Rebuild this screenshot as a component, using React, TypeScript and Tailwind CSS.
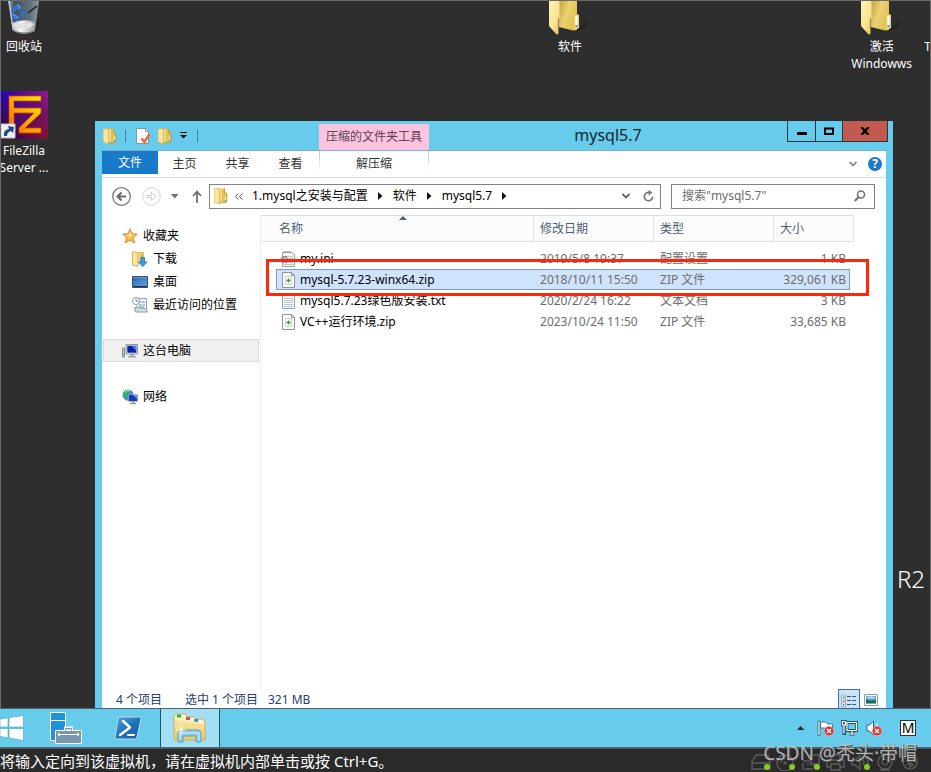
import type { ReactNode } from "react";
import clsx from "clsx";

type FileRow = {
  name: string;
  date: string;
  type: string;
  size: string;
  icon: "ini" | "zip" | "txt";
};

const files: FileRow[] = [
  { name: "my.ini", date: "2019/5/8 19:37", type: "配置设置", size: "1 KB", icon: "ini" },
  { name: "mysql-5.7.23-winx64.zip", date: "2018/10/11 15:50", type: "ZIP 文件", size: "329,061 KB", icon: "zip" },
  { name: "mysql5.7.23绿色版安装.txt", date: "2020/2/24 16:22", type: "文本文档", size: "3 KB", icon: "txt" },
  { name: "VC++运行环境.zip", date: "2023/10/24 11:50", type: "ZIP 文件", size: "33,685 KB", icon: "zip" },
];

const selectedName = "mysql-5.7.23-winx64.zip";

function FolderIcon() {
  return (
    <svg width="14" height="16" viewBox="0 0 14 16" aria-hidden="true">
      <path d="M4 .5h7v4.500l2 1v8.500H4z" fill="#e3c050" />
      <path d="M5.500 1.500H8v12H5.500z" fill="#f0d988" />
      <path d="M0 1l4-.5 1.500 1V16L0 14z" fill="#f8e7a0" stroke="#d4ac42" strokeWidth=".7" />
      <path d="M10.500.5V5h2.300v9L5.500 15.200" fill="none" stroke="#c0952f" strokeWidth=".8" />
      <path d="M11.500 8.500v4" stroke="#fff" />
      <path d="M11 12h1.200v1.200H11z" fill="#4f9be8" />
    </svg>
  );
}

function BigFolderIcon() {
  return (
    <svg width="42" height="34" viewBox="0 0 42 34" aria-hidden="true">
      <defs>
        <linearGradient id="folder-front" x1="0" x2="1" y2="1">
          <stop offset="0" stopColor="#fff3b4" />
          <stop offset=".6" stopColor="#f8e391" />
          <stop offset="1" stopColor="#e3bf55" />
        </linearGradient>
        <linearGradient id="folder-back" x1="0" x2="1" y2=".5">
          <stop offset="0" stopColor="#c5a23e" />
          <stop offset=".5" stopColor="#ecd173" />
          <stop offset="1" stopColor="#e2c04f" />
        </linearGradient>
      </defs>
      <path d="M28 30l8-8 4-5-3 8-6 4z" fill="#222" />
      <path d="M10 0h18v29l-4 .5L10 26z" fill="url(#folder-back)" />
      <path d="M25 14l3-1 2 1v13l-5 2z" fill="#efd77f" />
      <path d="M27.5 15v9" stroke="#fff" strokeWidth="2" />
      <path d="M26.5 24h2v2h-2z" fill="#5596e5" />
      <path d="M0 0h10.500v17l-1 1v15l-2 .5L0 25z" fill="url(#folder-front)" />
    </svg>
  );
}

function RecycleBinIcon() {
  return (
    <svg width="36" height="34" viewBox="-1 0 36 34" aria-hidden="true">
      <defs>
        <linearGradient id="bin-glass" x1="0" x2="1">
          <stop offset="0" stopColor="#aab9c4" />
          <stop offset=".2" stopColor="#43505c" />
          <stop offset=".7" stopColor="#61707c" />
          <stop offset="1" stopColor="#8b9aa5" />
        </linearGradient>
        <linearGradient id="bin-base" x1="0" x2="1">
          <stop offset="0" stopColor="#b8b8b8" />
          <stop offset=".4" stopColor="#f4f4f4" />
          <stop offset="1" stopColor="#9b9b9b" />
        </linearGradient>
      </defs>
      <path d="M28 31l6-5-2-8-4 2z" fill="#242424" />
      <path d="M1 0h31l-4 30q-11 6-22 0z" fill="url(#bin-glass)" />
      <path d="M4.500 22q12-5 24-1l-1.500 9q-10 5-20 0z" fill="url(#bin-base)" />
      <path d="M6 24l5-2 5 2 6-3 5 2-4 4-7 1-8-1z" fill="#dfe2e3" />
      <path d="M7 5l4-2 3 3-1 3-3-1-2 3-3-1zM14 9l4 1-1 6-3-1zM5 12l3 1 5 4-3 3-5-3z" fill="#2f6fd8" />
      <path d="M10 4l3 2-1 2M6 13l5 4" stroke="#78acf1" fill="none" />
      <path d="M21 12l9-7" stroke="#29333c" strokeWidth="2" />
      <path d="M2 0l4 29" stroke="#cbd8e0" />
      <path d="M7 30q10 4 20 0" stroke="#777" fill="none" />
    </svg>
  );
}

function FileZillaIcon() {
  return (
    <svg width="48" height="48" viewBox="0 0 48 48" aria-hidden="true">
      <defs>
        <linearGradient id="fz-bg" x1="0" x2="1" y2="1">
          <stop offset="0" stopColor="#0b00f0" />
          <stop offset=".45" stopColor="#4b0a84" />
          <stop offset="1" stopColor="#a01420" />
        </linearGradient>
        <linearGradient id="fz-tint" x1="1" x2="0" y1="0" y2="1">
          <stop offset="0" stopColor="#a0229a" stopOpacity=".8" />
          <stop offset=".5" stopColor="#5a0d50" stopOpacity=".3" />
          <stop offset="1" stopColor="#12002a" />
        </linearGradient>
        <linearGradient id="fz-fg" x1="0" x2="1" y1="1" y2="0">
          <stop offset="0" stopColor="#ff6b00" />
          <stop offset="1" stopColor="#fff200" />
        </linearGradient>
      </defs>
      <path d="M0 0h48v48H0z" fill="url(#fz-bg)" />
      <path d="M0 0h48v48H0z" fill="url(#fz-tint)" />
      <path
        d="M9 5h32v5H14v7h27v5L25 37h16v5H19v-5l15-15H14v19H9z"
        fill="url(#fz-fg)"
        stroke="#d43a10"
        strokeWidth=".8"
      />
      <path d="M1 33h14v14H1z" fill="#eef0f4" stroke="#c3c7ce" />
      <path d="M4 45q-1-6 5-7l-1-3 6 1-1 6-2-2q-4 1-4 5z" fill="#1c4a86" />
    </svg>
  );
}

function PropertiesIcon() {
  return (
    <svg width="15" height="16" viewBox="0 0 15 16" aria-hidden="true">
      <path d="M.5.5h9l3 3v12H.5z" fill="#fff" stroke="#8d949b" />
      <path d="M9.500.5v3h3" fill="#e8e8e8" stroke="#8d949b" />
      <path d="M5.500 10.500l3 3.500L13.500 6" fill="none" stroke="#e8703f" strokeWidth="2.600" />
    </svg>
  );
}

function StarIcon() {
  return (
    <svg width="16" height="16" viewBox="0 0 16 16" aria-hidden="true">
      <path
        d="M8 .8l2 5 5.300.3-4.200 3.400 1.500 5.400L8 12l-4.700 2.900 1.500-5.400L.7 6.100 6 5.800z"
        fill="#fcbf45"
        stroke="#e2862a"
        strokeLinejoin="round"
      />
      <path d="M8 3l1.300 3.700H13L8 9.500 4 7l2.500-.3z" fill="#ffe39a" />
    </svg>
  );
}

function DownloadsIcon() {
  return (
    <svg width="16" height="16" viewBox="0 0 16 16" aria-hidden="true">
      <path d="M3 1h9v12H5z" fill="#e3bf57" />
      <path d="M6 2h2v11H6z" fill="#f6e19a" />
      <path d="M.5 1H5l1 1v13.500l-5.500-1.500z" fill="#f9e7a0" stroke="#cfa63e" strokeWidth=".8" />
      <path d="M9 6.500h3.500V11H15l-4.200 4.500L6.500 11H9z" fill="#39a0ea" stroke="#1e6fb8" strokeWidth=".8" />
    </svg>
  );
}

function DesktopIcon() {
  return (
    <svg width="16" height="16" viewBox="0 0 16 16" aria-hidden="true">
      <defs>
        <linearGradient id="desk-screen" x1="0" x2="1" y2="1">
          <stop offset="0" stopColor="#2d65b5" />
          <stop offset="1" stopColor="#5fa3e3" />
        </linearGradient>
      </defs>
      <path d="M.5 2.500h15v11H.5z" fill="url(#desk-screen)" stroke="#3c4f69" />
      <path d="M1 12.500h14" stroke="#1d3354" />
      <path d="M1.500 3.500h13" stroke="#83b4e6" strokeWidth=".6" />
    </svg>
  );
}

function RecentIcon() {
  return (
    <svg width="16" height="16" viewBox="0 0 16 16" aria-hidden="true">
      <path d="M5 1.500h9.500V12H5z" fill="#f5f7f8" stroke="#99a1a8" />
      <path d="M7 5h2M10 5h3M7 8h3M11 8h2M7 10h5" stroke="#4897c5" />
      <path d="M2.500 10.500l11 1 2 3.500H3.500z" fill="#d9dde0" stroke="#949b9f" />
      <circle cx="4" cy="4" r="3.500" fill="#fff" stroke="#8f989f" />
      <path d="M4 2v2.200h1.800" stroke="#55606a" fill="none" strokeWidth=".8" />
    </svg>
  );
}

function ComputerIcon() {
  return (
    <svg width="16" height="16" viewBox="0 0 16 16" aria-hidden="true">
      <path d="M.5 5h2v9h-2z" fill="#c3c8cb" stroke="#737b80" strokeWidth=".8" />
      <path d="M1 11h1v1H1z" fill="#3fb54b" />
      <path d="M4 1.500h11.500V11H4z" fill="#dfe5ea" stroke="#7f8a92" strokeWidth=".8" />
      <path d="M5.300 2.800h9v6.900h-9z" fill="#0b1fb0" />
      <path d="M9.500 2.800h4.800V8z" fill="#517ce6" />
      <path d="M8.500 11h3v2h2.500v1.500H6V13h2.500z" fill="#9fa7ac" />
    </svg>
  );
}

function NetworkIcon() {
  return (
    <svg width="16" height="16" viewBox="0 0 16 16" aria-hidden="true">
      <circle cx="6" cy="6" r="5.500" fill="#3d8ed6" />
      <path d="M2 3q3-3 6-2L6 4 4 5l1 2-2 1-2-2zM4 9l3-1 1 3-3 .5z" fill="#3cb545" />
      <path d="M3 3q2-2 5-1.500" stroke="#c7f0c4" fill="none" />
      <path d="M6.500 5.500h9v7h-9z" fill="#dbe3ea" stroke="#77828c" strokeWidth=".5" />
      <path d="M7 6h8.200v6H7z" fill="#1a34ba" />
      <path d="M11 6h4.200v4z" fill="#6f98ed" />
      <path d="M10 12.500h2v1.500h2v1.300H8V14h2z" fill="#8b959c" />
    </svg>
  );
}

function FileIcon({ kind }: { kind: FileRow["icon"] }) {
  if (kind === "zip") {
    return (
      <svg width="16" height="16" viewBox="0 0 16 16" aria-hidden="true">
        <path d="M2.500.5h9l3 3v12h-12z" fill="#fff" stroke="#8e9499" />
        <path d="M11.500.5v3h3" fill="none" stroke="#8e9499" />
        <path d="M5.500 4.500h6v8h-6z" fill="#fff" stroke="#cdd2d5" />
        <path d="M6.500 8.500h4M8.500 6.500v4" stroke="#28a12b" strokeWidth="1.400" />
      </svg>
    );
  }
  return (
    <svg width="16" height="16" viewBox="0 0 16 16" aria-hidden="true">
      <path d="M2.500 1.500h9l3 2v12h-12z" fill="#f6f8f9" stroke="#9aa0a5" />
      <path d="M4 0v2M6 0v2M8 0v2M10 0v2" stroke="#7e868c" strokeWidth=".8" />
      <path d="M4 5.500h9M4 7.500h9M4 9.500h9M4 11.500h9M4 13.500h9" stroke="#b4c7d2" />
      {kind === "ini" ? (
        <g>
          <circle cx="4.500" cy="8.500" r="2.800" fill="#d8e1e8" stroke="#60727f" strokeWidth="1.600" strokeDasharray="1.500 .8" />
          <circle cx="4.500" cy="8.500" r="1" fill="#607f98" />
        </g>
      ) : null}
    </svg>
  );
}

function Caret({ className }: { className?: string }) {
  return (
    <svg width="5" height="8" viewBox="0 0 5 8" className={className} aria-hidden="true">
      <path d="M0 0l4.500 4L0 8z" fill="#111" />
    </svg>
  );
}

function DesktopItem({ label, className, children }: { label: ReactNode; className: string; children: ReactNode }) {
  return (
    <button type="button" className={clsx("absolute flex flex-col items-center text-xs leading-[17px] text-white", className)}>
      {children}
      <span>{label}</span>
    </button>
  );
}

function NavItem({ label, icon, className }: { label: string; icon: ReactNode; className: string }) {
  return (
    <button type="button" className={clsx("flex h-[23px] items-center gap-[5px] text-left text-black", className)}>
      {icon}
      <span>{label}</span>
    </button>
  );
}

function TitleBar() {
  return (
    <header className="flex h-[29px] items-start pr-[5px] pl-[6px]">
      <div className="flex h-full w-[218px] items-center pl-[2px]">
        <FolderIcon />
        <span className="ml-2 h-3 w-px bg-[#477f98]" />
        <button type="button" aria-label="属性" className="ml-[10px]"><PropertiesIcon /></button>
        <button type="button" aria-label="新建文件夹" className="ml-[7px]"><FolderIcon /></button>
        <button type="button" aria-label="自定义快速访问工具栏" className="ml-2">
          <svg width="8" height="7" viewBox="0 0 8 7" aria-hidden="true">
            <path d="M0 .5h7" stroke="#111" />
            <path d="M0 3h7L3.500 6.500z" fill="#111" />
          </svg>
        </button>
        <span className="ml-[9px] h-3 w-px bg-[#477f98]" />
      </div>
      <div className="mt-[3px] flex h-[26px] w-[110px] items-center justify-center bg-[#fbc3de] text-[#5b4351]">
        压缩的文件夹工具
      </div>
      <h1 className="flex-1 text-center text-base leading-7 text-[#16262e]">mysql5.7</h1>
      <div className="flex h-[21px] border-x border-b border-[#28363c]">
        <button type="button" aria-label="最小化" className="flex w-[27px] items-center justify-center">
          <svg width="10" height="10" viewBox="0 0 10 10" aria-hidden="true"><path d="M0 6h10v3H0z" fill="#000" /></svg>
        </button>
        <button type="button" aria-label="最大化" className="flex w-[27px] items-center justify-center border-l border-[#28363c]">
          <svg width="10" height="8" viewBox="0 0 10 8" aria-hidden="true"><path d="M1 1.500h8v5.500H1z" fill="none" stroke="#000" strokeWidth="2" /></svg>
        </button>
        <button type="button" aria-label="关闭" className="flex w-[45px] items-center justify-center border-l border-[#28363c] bg-[#c35a50]">
          <svg width="10" height="8" viewBox="0 0 10 8" aria-hidden="true"><path d="M1.500 0l7 8M8.500 0l-7 8" stroke="#000" strokeWidth="2.400" /></svg>
        </button>
      </div>
    </header>
  );
}

function Ribbon() {
  return (
    <nav className="flex h-7 items-start border-t border-b border-t-[#7fb0c8] border-b-[#dcdcdc] text-[#333]">
      <button type="button" className="h-[23px] w-14 bg-[#1979ca] text-white">文件</button>
      {["主页", "共享", "查看"].map((tab) => (
        <button key={tab} type="button" className="h-[26px] w-[53px]">{tab}</button>
      ))}
      <div className="ml-[2px] flex">
        <span className="h-5 w-px bg-linear-to-b from-[#c4c4c4] to-white" />
        <button type="button" className="h-[26px] w-[108px]">解压缩</button>
        <span className="h-5 w-px bg-linear-to-b from-[#c4c4c4] to-white" />
      </div>
      <div className="ml-auto flex h-[26px] items-center gap-[11px] pr-1">
        <button type="button" aria-label="展开功能区">
          <svg width="8" height="6" viewBox="0 0 8 6" aria-hidden="true"><path d="M.5 1L4 4.500 7.500 1" fill="none" stroke="#8d8d8d" strokeWidth="1.800" /></svg>
        </button>
        <button type="button" aria-label="帮助" className="size-[14px] rounded-full bg-[#1979ca] font-bold leading-[14px] text-white">?</button>
      </div>
    </nav>
  );
}

function AddressRow() {
  return (
    <div className="flex h-[37px] items-center pr-[11px] pb-px pl-[10px]">
      <button type="button" aria-label="后退">
        <svg width="19" height="19" viewBox="0 0 19 19" aria-hidden="true">
          <circle cx="9.500" cy="9.500" r="8.800" fill="none" stroke="#747474" strokeWidth="1.200" />
          <path d="M14 9.500H6M9.500 5.500l-4 4 4 4" fill="none" stroke="#6a6a6a" strokeWidth="2" />
        </svg>
      </button>
      <button type="button" aria-label="前进" className="ml-[11px]">
        <svg width="19" height="19" viewBox="0 0 19 19" aria-hidden="true">
          <circle cx="9.500" cy="9.500" r="8.800" fill="none" stroke="#d4d4d4" />
          <path d="M5 8.500h4.500V5.500l4.500 4-4.500 4v-3H5z" fill="none" stroke="#cfcfcf" />
        </svg>
      </button>
      <button type="button" aria-label="最近浏览的位置" className="ml-[10px]">
        <svg width="8" height="5" viewBox="0 0 8 5" aria-hidden="true"><path d="M0 0h7.500L3.800 4.500z" fill="#707070" /></svg>
      </button>
      <button type="button" aria-label="上移" className="ml-[13px]">
        <svg width="10" height="13" viewBox="0 0 10 13" aria-hidden="true"><path d="M5 13V2M1 6l4-4.500L9 6" fill="none" stroke="#6f6f6f" strokeWidth="1.800" /></svg>
      </button>
      <div className="ml-[7px] flex h-[25px] min-w-0 flex-1 items-center border border-[#828282] pr-[6px] pl-1 text-black">
        <FolderIcon />
        <svg width="8" height="7" viewBox="0 0 8 7" className="ml-[7px]" aria-hidden="true"><path d="M3.500.5l-3 3 3 3M7.500.5l-3 3 3 3" fill="none" stroke="#555" /></svg>
        <button type="button" className="ml-[9px]">1.mysql之安装与配置</button>
        <Caret className="ml-[10px]" />
        <button type="button" className="ml-[10px]">软件</button>
        <Caret className="ml-[10px]" />
        <button type="button" className="ml-[10px]">mysql5.7</button>
        <Caret className="ml-[10px]" />
        <button type="button" aria-label="以前的位置" className="ml-auto">
          <svg width="8" height="6" viewBox="0 0 8 6" aria-hidden="true"><path d="M.5 1L4 4.500 7.500 1" fill="none" stroke="#606060" strokeWidth="1.800" /></svg>
        </button>
        <button type="button" aria-label="刷新" className="ml-[13px]">
          <svg width="11" height="12" viewBox="0 0 11 12" aria-hidden="true">
            <path d="M6.500 2.500A4.200 4.200 0 1 0 9.700 6.500" fill="none" stroke="#777" strokeWidth="1.600" />
            <path d="M5.500 0v5.500L9.500 2.500z" fill="#777" />
          </svg>
        </button>
      </div>
      <label className="ml-[10px] flex h-[25px] w-[204px] items-center border border-[#828282] pr-2 pl-[10px]">
        <input type="search" aria-label="搜索" placeholder={'搜索"mysql5.7"'} className="min-w-0 flex-1 bg-transparent outline-none placeholder:text-[#6d6d6d]" />
        <svg width="12" height="12" viewBox="0 0 12 12" aria-hidden="true">
          <circle cx="7" cy="4.500" r="3.500" fill="none" stroke="#707070" strokeWidth="1.600" />
          <path d="M4.500 7L.8 11" stroke="#707070" strokeWidth="2" />
        </svg>
      </label>
    </div>
  );
}

function NavPane() {
  return (
    <aside className="flex w-[159px] shrink-0 flex-col border-r border-[#ededed] px-px pt-[9px]">
      <NavItem label="收藏夹" icon={<StarIcon />} className="pl-[19px]" />
      <NavItem label="下载" icon={<DownloadsIcon />} className="pl-[29px]" />
      <NavItem label="桌面" icon={<DesktopIcon />} className="pl-[29px]" />
      <NavItem label="最近访问的位置" icon={<RecentIcon />} className="pl-[29px]" />
      <NavItem label="这台电脑" icon={<ComputerIcon />} className="mt-[23px] border border-[#d9d9d9] bg-[#f0f0f0] pl-[18px]" />
      <NavItem label="网络" icon={<NetworkIcon />} className="mt-[23px] pl-[19px]" />
    </aside>
  );
}

function FileList() {
  return (
    <div className="relative min-w-0 flex-1 pl-px">
      <table className="w-[592px] table-fixed border-separate border-spacing-0 text-left">
        <colgroup>
          <col className="w-[14px]" />
          <col className="w-[258px]" />
          <col className="w-[120px]" />
          <col className="w-[120px]" />
          <col className="w-[76px]" />
          <col className="w-1" />
        </colgroup>
        <thead className="text-[#4c607a]">
          <tr className="h-[27px] bg-[#fcfcfc]">
            <th colSpan={2} className="relative border-y border-r border-[#dedfe1] pl-[17px] font-normal">
              名称
              <svg width="8" height="4" viewBox="0 0 8 4" className="absolute top-0 left-[137px]" aria-hidden="true"><path d="M4 0l4 4H0z" fill="#4c607a" /></svg>
            </th>
            <th className="border-y border-r border-[#dedfe1] pl-[6px] font-normal">修改日期</th>
            <th className="border-y border-r border-[#dedfe1] pl-[6px] font-normal">类型</th>
            <th colSpan={2} className="border-y border-r border-[#dedfe1] pl-[6px] font-normal">大小</th>
          </tr>
        </thead>
        <tbody className="text-[#6d6d6d]">
          <tr className="h-[6px]"><td colSpan={6} /></tr>
          {files.map((file) => {
            const selected = file.name === selectedName;
            const cell = selected ? "bg-[#cfe3fd]" : "";
            return (
              <tr key={file.name} className={clsx("h-[21px]", selected && "relative")}>
                <td />
                <td className={clsx("pl-1 text-black", cell)}>
                  <span className="flex items-center gap-1">
                    <FileIcon kind={file.icon} />
                    {file.name}
                  </span>
                </td>
                <td className={clsx("pl-[6px]", cell)}>{file.date}</td>
                <td className={clsx("pl-[6px]", cell)}>{file.type}</td>
                <td className={clsx("pr-1 text-right", cell)}>{file.size}</td>
                <td>
                  {selected ? <span className="absolute inset-y-0 right-1 left-[14px] border border-[#7c9fca]" /> : null}
                </td>
              </tr>
            );
          })}
        </tbody>
      </table>
      <div className="pointer-events-none absolute top-[44px] left-[5px] h-[37px] w-[603px] border-3 border-[#fb280b]" />
    </div>
  );
}

function StatusBar() {
  return (
    <footer className="flex h-[19px] shrink-0 items-start pr-2 pl-[14px] leading-[22px] text-[#24406c]">
      <span className="w-[69px]">4 个项目</span>
      <span className="w-[83px]">选中 1 个项目</span>
      <span>321 MB</span>
      <button type="button" aria-label="详细信息" className="ml-auto flex h-[19px] w-[22px] justify-center border border-b-0 border-[#36719f] bg-[#c8e4f8] pt-1">
        <svg width="16" height="14" viewBox="0 0 16 14" aria-hidden="true">
          <path d="M.5 1h4v12h-4zM.5 5h4M.5 9h4" fill="#fff" stroke="#8599aa" strokeWidth=".7" />
          <path d="M2 2.500h1.500v1.500H2z" fill="#3a8b49" />
          <path d="M2 6.300h1.500v1.500H2z" fill="#d82424" />
          <path d="M2 10.300h1.500v1.500H2z" fill="#2868c4" />
          <path d="M6 2.500h4M11 2.500h4M6 6.500h4M11 6.500h4M6 10.500h4M11 10.500h4" stroke="#43576b" />
        </svg>
      </button>
      <button type="button" aria-label="大缩略图" className="ml-[3px] flex h-[19px] w-[15px] justify-center pt-[5px]">
        <svg width="14" height="12" viewBox="0 0 14 12" aria-hidden="true">
          <path d="M.5.5h13v11H.5z" fill="#fff" stroke="#8d99a5" />
          <path d="M2 2h10v7.500H2z" fill="#6bb5e6" />
          <path d="M2 5l4.500 1.500L12 5.500v4H2z" fill="#246b5d" />
          <path d="M4 4q3-2 6 0" stroke="#fff" fill="none" />
        </svg>
      </button>
    </footer>
  );
}

function Explorer() {
  return (
    <section aria-label="mysql5.7" className="absolute top-[120px] right-[37px] bottom-0 left-[94px] flex flex-col bg-[#67cbeb] text-xs">
      <TitleBar />
      <div className="mx-[7px] flex min-h-0 flex-1 flex-col bg-white">
        <Ribbon />
        <AddressRow />
        <div className="flex min-h-0 flex-1">
          <NavPane />
          <FileList />
        </div>
        <StatusBar />
      </div>
    </section>
  );
}

function ErrorBadge({ x, y }: { x: number; y: number }) {
  return (
    <g>
      <circle cx={x} cy={y} r="4.700" fill="#df3028" stroke="#f5b6b1" strokeWidth=".6" />
      <path d={`M${x - 2} ${y - 2}l4 4M${x + 2} ${y - 2}l-4 4`} stroke="#fff" strokeWidth="1.500" />
    </g>
  );
}

function Taskbar() {
  return (
    <div className="flex h-10 shrink-0 items-center border-t border-b border-[#4d6570] bg-[#67cbeb] pr-[15px]">
      <button type="button" aria-label="开始">
        <svg width="24" height="26" viewBox="0 0 24 26" aria-hidden="true">
          <path d="M0 4l8-1.200V12H0zM9 2.600L23.500.5V12H9zM0 13.500h8v9.200L0 21.500zM9 13.500h14.500v12L9 23z" fill="#fff" stroke="#429fbd" strokeWidth=".6" />
        </svg>
      </button>
      <button type="button" aria-label="服务器管理器" className="ml-[26px]">
        <svg width="32" height="32" viewBox="0 0 32 32" aria-hidden="true">
          <path d="M.5.500h15v28H.5z" fill="#2291dd" stroke="#fff" />
          <path d="M.5 8.500h15" stroke="#fff" />
          <path d="M5.500 18.500h26v13h-26z" fill="#7896ae" stroke="#fff" />
          <path d="M15.500 18v-2h6v2" fill="none" stroke="#fff" strokeWidth="3" />
          <path d="M15.500 18.500v-2h6v2" fill="none" stroke="#7896ae" />
          <path d="M8 22.500h21" stroke="#fff" />
          <path d="M9 21v3M28 21v3" stroke="#fff" strokeWidth="1.500" />
        </svg>
      </button>
      <button type="button" aria-label="Windows PowerShell" className="ml-8">
        <svg width="28" height="24" viewBox="0 0 28 24" aria-hidden="true">
          <defs>
            <linearGradient id="ps-bg" x1="0" x2="1" y2="1">
              <stop offset="0" stopColor="#5aa5d8" />
              <stop offset=".5" stopColor="#2173b8" />
              <stop offset="1" stopColor="#1c5591" />
            </linearGradient>
          </defs>
          <path d="M5 1h21q1.500 0 1 1.500L23 21q-.5 2-2 2H2q-1.500 0-1-1.500L4 2.500Q4.300 1 5 1z" fill="url(#ps-bg)" stroke="#b6dcf0" />
          <path d="M9 5l7 6.500L6 19" fill="none" stroke="#fff" strokeWidth="2.400" strokeLinecap="round" strokeLinejoin="round" />
          <path d="M14 19h6" stroke="#fff" strokeWidth="2" strokeLinecap="round" />
        </svg>
      </button>
      <button type="button" aria-label="文件资源管理器" className="ml-[18px] flex h-full w-[60px] items-center justify-center border-x border-[#294f5d] bg-[#a1dff4]">
        <svg width="34" height="30" viewBox="0 0 34 30" aria-hidden="true">
          <defs>
            <linearGradient id="tb-folder" x1="0" x2="0" y2="1">
              <stop offset="0" stopColor="#fbefb9" />
              <stop offset="1" stopColor="#edc95e" />
            </linearGradient>
          </defs>
          <path d="M1 3l2-2h9l2 3h8l2 2h6l2 2v19H1z" fill="url(#tb-folder)" stroke="#c99c3e" strokeWidth=".7" />
          <path d="M4 1.500h4v3H4z" fill="#30b54a" />
          <path d="M9 2h3v2H9zM17 5h4v2h-4zM26 7h3v2h-3z" fill="#fff" />
          <path d="M13 4h4v3h-4z" fill="#de4d3a" />
          <path d="M21 6h4v3h-4z" fill="#3493dd" />
          <path d="M2 6h10l2 2h7l2 2h8" stroke="#fffbe0" fill="none" />
          <path d="M5 29V20q0-3 3-3h17q3 0 3 3v9h-5v-6H10v6z" fill="#8cc9e8" stroke="#5ba3c9" />
          <path d="M7 27v-7h19v7" fill="none" stroke="#dff3fb" />
          <path d="M8 12v10M3 17h10M5 14l6 6M11 14l-6 6" stroke="#fffde8" strokeWidth=".8" />
        </svg>
      </button>
      <div className="ml-auto flex items-center">
        <button type="button" aria-label="显示隐藏的图标">
          <svg width="8" height="4" viewBox="0 0 8 4" aria-hidden="true"><path d="M3.500 0L7.500 4H0z" fill="#1c2a30" /></svg>
        </button>
        <button type="button" aria-label="操作中心" className="ml-3">
          <svg width="17" height="16" viewBox="0 0 17 16" aria-hidden="true">
            <path d="M1 1h2v14.500H1zM3.500 2h5l2 2h5v6h-5l-2-2h-5z" fill="#fff" stroke="#2e6478" strokeWidth=".8" />
            <ErrorBadge x={12} y={11} />
          </svg>
        </button>
        <button type="button" aria-label="网络" className="ml-[7px]">
          <svg width="17" height="16" viewBox="0 0 17 16" aria-hidden="true">
            <path d="M6 2.500h9.500v8H6zM8 14h6M11 11v3M1.500 1.500h3v3.500h-3zM3 5v8.500h2" fill="none" stroke="#245365" strokeWidth="2.800" />
            <path d="M6 2.500h9.500v8H6zM8 14h6M11 10.500V14M1.500 1.500h3v3.500h-3zM3 5v8.500" fill="none" stroke="#fff" strokeWidth="1.200" />
          </svg>
        </button>
        <button type="button" aria-label="音量" className="ml-2">
          <svg width="17" height="16" viewBox="0 0 17 16" aria-hidden="true">
            <path d="M1 5h2.500l4-4v14l-4-4H1z" fill="#fff" stroke="#2e6478" />
            <path d="M10 3q2 2 1 4" fill="none" stroke="#fff" />
            <ErrorBadge x={11} y={11} />
          </svg>
        </button>
        <button type="button" aria-label="输入法" className="ml-[17px] size-4 border border-[#24343b] bg-white text-sm leading-[14px] text-black">M</button>
      </div>
    </div>
  );
}

const deviceIcons = [
  { label: "硬盘", path: "M5 1h12l2 7v7H1V8zM1 9h18", live: true },
  { label: "光驱", path: "M9 1a8 8 0 1 0 .1 0zM9 8a1 1 0 1 0 .1 0M9 4a5 5 0 0 0-4 5", live: true },
  { label: "网络适配器", path: "M8 1h10v9h-8V7H2M2 9v7M4 15h8M6 10h2M13 10v3", live: true },
  { label: "打印机", path: "M5 6V1h9v5M5 13H1V6h17v7h-4M5 10h9v6H5z", live: false },
  { label: "声卡", path: "M1 6h3l5-4v13l-5-4H1zM12 6q2 2 0 5M15 3q4 5 0 10", live: true },
  { label: "摄像头", path: "M9 1a7 7 0 1 0 .1 0zM9 5a3 3 0 1 0 .1 0zM4 16h10", live: false },
  { label: "蓝牙", path: "M9 1a7 7 0 1 0 .1 0zM6 6l6 5-3 2V3l3 3-6 5", live: false },
];

function VmStatusStrip() {
  return (
    <div className="relative flex h-6 shrink-0 items-center justify-between border-t border-[#555] bg-[#2a2a2a] pr-[10px] text-white">
      <p className="text-[15px] leading-5 whitespace-nowrap">将输入定向到该虚拟机，请在虚拟机内部单击或按 Ctrl+G。</p>
      <div className="flex gap-[5px] pt-1">
        {deviceIcons.map((device) => (
          <button key={device.label} type="button" aria-label={device.label}>
            <svg width="20" height="17" viewBox="0 0 20 17" aria-hidden="true">
              <path d={device.path} fill="none" stroke="#5c5c5c" strokeWidth="1.400" />
              {device.live ? <circle cx="16" cy="13" r="3" fill="#86cc1e" /> : null}
            </svg>
          </button>
        ))}
      </div>
      <span className="pointer-events-none absolute right-[14px] bottom-[7px] text-[19px] leading-6 whitespace-nowrap text-[#c9c9c9]/85 [text-shadow:1px_1px_1px_#444]">
        CSDN @秃头·带帽
      </span>
    </div>
  );
}

export default function App() {
  return (
    <div className="flex h-screen flex-col overflow-hidden bg-[#2e2e2e] font-['Noto_Sans','Noto_Sans_CJK_SC',sans-serif]">
      <main className="relative flex-1 overflow-hidden border-x border-t border-[#6b6b6b]">
        <DesktopItem label="回收站" className="top-0 left-[5px] gap-[3px]">
          <RecycleBinIcon />
        </DesktopItem>
        <DesktopItem label={<>FileZilla<br />Server ...</>} className="top-[90px] -left-1 w-[54px] gap-[3px]">
          <FileZillaIcon />
        </DesktopItem>
        <DesktopItem label="软件" className="top-0 left-[548px] gap-[3px]">
          <BigFolderIcon />
        </DesktopItem>
        <DesktopItem label={<>激活<br />Windowws</>} className="top-0 right-[18px] gap-[3px]">
          <BigFolderIcon />
        </DesktopItem>
        <span className="absolute top-[37px] -right-px text-xs leading-[17px] text-white">T</span>
        <span className="absolute right-[5px] bottom-[113px] text-2xl leading-8 font-light text-white">R2</span>
        <Explorer />
      </main>
      <Taskbar />
      <VmStatusStrip />
    </div>
  );
}
